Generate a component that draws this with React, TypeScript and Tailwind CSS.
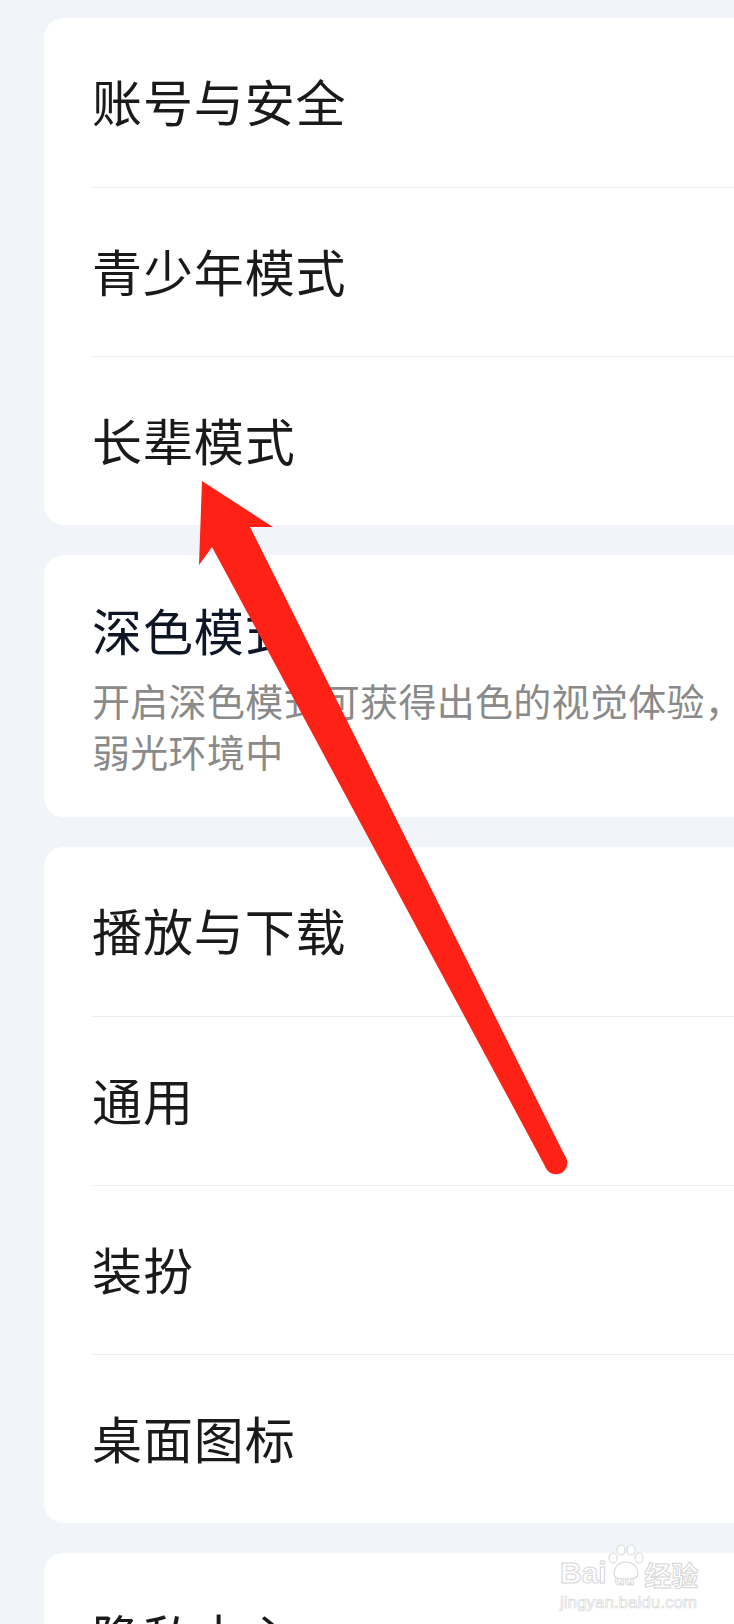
import React from 'react'

const font = { fontFamily: '"Noto Sans CJK SC", "Noto Sans", sans-serif' }

function Row({ label, first }: { label: string; first?: boolean }) {
  return (
    <div
      className={`flex h-[169px] items-center pb-[5px] text-[50px] leading-none tracking-[0.9px] text-[#1a1a1a] ${
        first ? '' : 'border-t border-[#ebedf0]'
      }`}
    >
      {label}
    </div>
  )
}

function Card({ children }: { children: React.ReactNode }) {
  return <div className="w-[740px] shrink-0 rounded-[20px] bg-white pl-[48px]">{children}</div>
}

function Arrow() {
  return (
    <svg
      className="pointer-events-none absolute left-0 top-0"
      width="734"
      height="1624"
      viewBox="0 0 734 1624"
    >
      <polygon
        fill="#fe2116"
        points="202,481 273,527 250,527 566,1158 546,1168 212,547 199,565"
      />
      <circle cx="556" cy="1163" r="11.3" fill="#fe2116" />
    </svg>
  )
}

function Watermark() {
  return (
    <div className="pointer-events-none absolute left-[560px] top-[1542px] select-none">
      <svg className="absolute left-[46px] top-[2px]" width="40" height="36" viewBox="0 0 40 36">
        <g fill="#ffffff" stroke="#dadada" strokeWidth="1.1">
          <ellipse cx="7" cy="14" rx="4" ry="5" />
          <ellipse cx="15" cy="6" rx="4" ry="5" />
          <ellipse cx="25" cy="6" rx="4" ry="5" />
          <ellipse cx="33" cy="14" rx="4" ry="5" />
          <path d="M8 30 C8 22 14 18 20 18 C26 18 32 22 32 30 C32 34 28 35 20 35 C12 35 8 34 8 30 Z" />
        </g>
      </svg>
      <div className="flex items-end pt-[16px]">
        <span
          className="text-[30px] font-bold leading-none text-white [-webkit-text-stroke:1px_#d6d6d6]"
          style={{ fontFamily: '"Liberation Sans", Arial, sans-serif' }}
        >
          Bai
        </span>
        <span
          className="ml-[8px] text-[16px] font-bold leading-none text-white [-webkit-text-stroke:0.8px_#d6d6d6]"
          style={{ fontFamily: '"Liberation Sans", Arial, sans-serif' }}
        >
          du
        </span>
        <span className="ml-[10px] text-[27px] font-bold leading-none text-white [-webkit-text-stroke:1px_#d6d6d6]" style={font}>
          经验
        </span>
      </div>
      <div
        className="mt-[6px] text-[17px] leading-none text-white [-webkit-text-stroke:0.7px_#dadada]"
        style={{ fontFamily: '"Liberation Sans", Arial, sans-serif' }}
      >
        jingyan.baidu.com
      </div>
    </div>
  )
}

export default function App() {
  return (
    <div
      className="relative h-[1624px] w-[734px] overflow-hidden bg-[#f1f4f9] pl-[44px] pt-[18px]"
      style={font}
    >
      <div className="flex flex-col gap-[30px]">
        <Card>
          <Row label="账号与安全" first />
          <Row label="青少年模式" />
          <Row label="长辈模式" />
        </Card>

        <Card>
          <div className="h-[262px] pt-[44px]">
            <div className="text-[50px] leading-[60px] tracking-[0.9px] text-[#0e1525]">深色模式</div>
            <div className="mt-[15px] whitespace-nowrap text-[38px] leading-[51px] tracking-[0.3px] text-[#8a8a8a]">
              <div>开启深色模式可获得出色的视觉体验，适用于</div>
              <div>弱光环境中</div>
            </div>
          </div>
        </Card>

        <Card>
          <Row label="播放与下载" first />
          <Row label="通用" />
          <Row label="装扮" />
          <Row label="桌面图标" />
        </Card>

        <Card>
          <Row label="隐私中心" first />
        </Card>
      </div>

      <Arrow />
      <Watermark />
    </div>
  )
}
